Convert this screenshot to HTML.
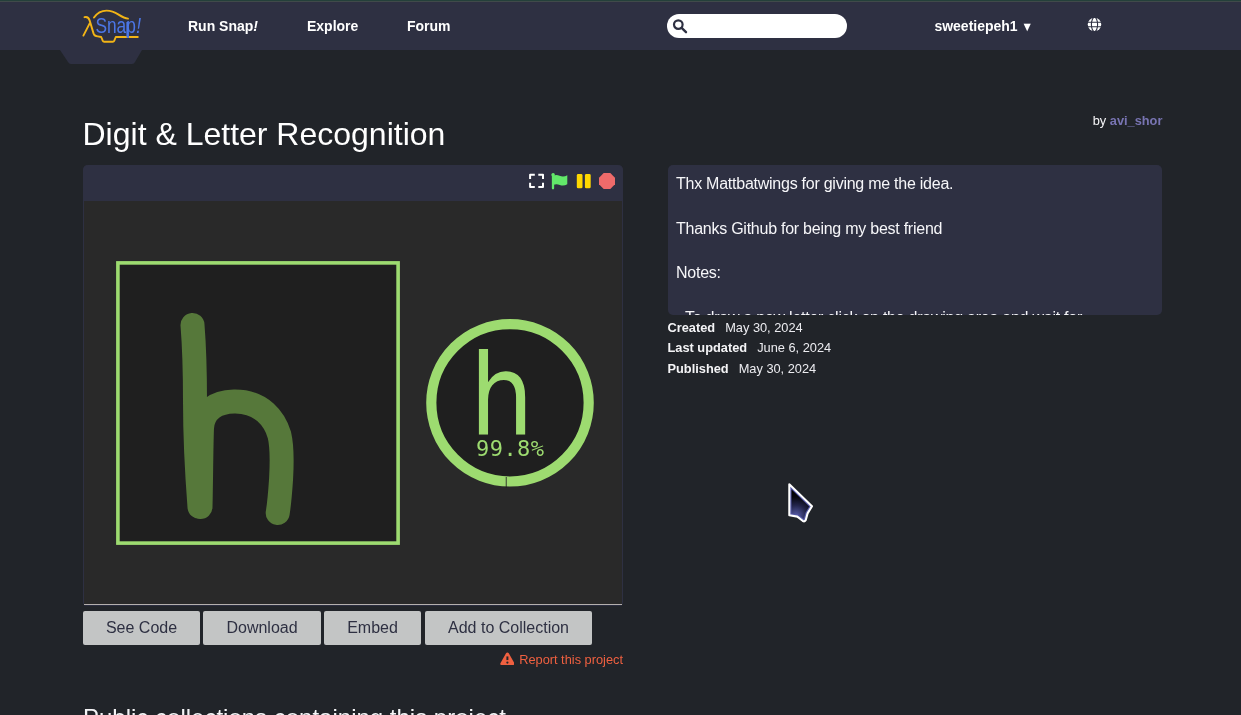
<!DOCTYPE html>
<html lang="en">
<head>
<meta charset="utf-8">
<title>Digit &amp; Letter Recognition</title>
<style>
*{box-sizing:border-box}
html,body{margin:0;padding:0}
body{width:1241px;height:715px;overflow:hidden;background:#212429;color:#f1f1f4;font-family:"Liberation Sans",Arial,sans-serif;position:relative}
#wrap{position:absolute;left:0;top:0;width:1241px;height:715px;overflow:hidden;will-change:transform}
.abs{position:absolute}
#topline{left:0;top:0;width:1241px;height:2px;background:linear-gradient(#24403a 0 1px,#404a4a 1px 2px)}
#nav{left:0;top:2px;width:1241px;height:48px;background:#2e3042}
#tab{left:60px;top:50px;width:82px;height:14px}
.navtxt{font-weight:bold;font-size:14px;line-height:16px;color:#fff;white-space:nowrap;top:18px}
#search{left:667px;top:14px;width:180px;height:24px;border-radius:12px;background:#fff}
h1{margin:0;font-weight:normal;font-size:32px;line-height:38px;left:82.500px;top:115px;white-space:nowrap;color:#fff}
#by{right:78.600px;top:113px;font-size:12.800px;line-height:16px;white-space:nowrap;color:#f6f6f8}
#by b{color:#7874b2}
#stagebox{left:83px;top:165px;width:540px;height:441px;background:#292929;border-radius:5px 5px 4px 4px;overflow:hidden;box-shadow:inset 1px 0 0 #2e3042,inset -1px 0 0 #2e3042}
#stagehead{left:0;top:0;width:540px;height:36px;background:#2e3042}
#stageline{left:1px;top:439px;width:538px;height:1px;background:#b4afad;box-shadow:0 1px 0 #2a2d3f}
#desc{left:668px;top:165px;width:494px;height:150px;background:#2e3042;border-radius:5px;overflow:hidden;font-size:16px;line-height:22.25px;color:#f6f6f9;padding:8px 8px;white-space:nowrap}
#desc div{height:22.25px;letter-spacing:-0.25px}
.meta{left:667.500px;font-size:12.800px;line-height:16px;white-space:nowrap;color:#ececf0}
.meta b{margin-right:10px;color:#f4f4f6}
.btn{top:611px;height:34px;border-radius:2px;background:#c3c5c5;color:#2e3042;font-size:16px;line-height:34px;text-align:center;white-space:nowrap}
#report{top:652px;right:618px;font-size:12.800px;line-height:16px;color:#ef6040;white-space:nowrap}
h2{margin:0;font-weight:normal;font-size:24px;line-height:28px;left:83px;top:704px;white-space:nowrap;color:#f4f4f6}
</style>
</head>
<body>
<div id="wrap">
<div id="topline" class="abs"></div>
<div id="nav" class="abs"></div>
<svg id="tab" class="abs" viewBox="0 0 82 14"><path d="M0 0H82L75 12Q74 14 72 14H11Q9 14 8 12Z" fill="#2e3042"/></svg>

<svg id="logo" class="abs" style="left:80px;top:6px" width="66" height="40" viewBox="0 0 66 40">
 <path d="M4.5 11.2Q8.3 10.2 9.6 14.4L13.6 27.6Q14.6 30.2 17.6 30.4L21.2 31L22.8 34.8Q23.2 35.7 24.2 35.7L32.8 35.7Q33.8 35.7 34.2 34.8L35.8 31L57.8 31M10.2 16.4L3.4 29.6M14 11.6Q18.6 4.6 26.6 4.6Q32.4 4.6 38.6 8.6Q44.4 12.4 48 12.6" fill="none" stroke="#f2b416" stroke-width="1.9" stroke-linecap="round" stroke-linejoin="round"/>
 <text x="15.4" y="27" font-family="'Liberation Sans',sans-serif" font-size="21.5" fill="#4b76e6" textLength="45.800" lengthAdjust="spacingAndGlyphs" font-style="normal">Snap<tspan font-style="italic" dx="0.600">!</tspan></text>
 <path d="M47.2 16V31.6" stroke="#4b76e6" stroke-width="1.6" fill="none"/>
</svg>

<div class="abs navtxt" style="left:188px">Run Snap<i>!</i></div>
<div class="abs navtxt" style="left:307px">Explore</div>
<div class="abs navtxt" style="left:407px">Forum</div>

<div id="search" class="abs">
 <svg class="abs" style="left:5px;top:4px" width="16" height="16" viewBox="0 0 16 16"><circle cx="6.3" cy="6.6" r="4.3" fill="none" stroke="#2e3042" stroke-width="2.2"/><path d="M9.6 9.9L14 14.2" stroke="#2e3042" stroke-width="2.4" stroke-linecap="round"/></svg>
</div>

<div class="abs navtxt" style="left:934.400px">sweetiepeh1</div>
<div class="abs" style="left:1020.800px;top:20px;font-size:12.5px;line-height:14px;color:#fff;width:11px;text-align:center;transform:scale(0.96,1)">▼</div>
<svg class="abs" style="left:1087.300px;top:17px" width="15" height="15" viewBox="0 0 15 15">
 <circle cx="7.5" cy="7.5" r="6.750" fill="#fff"/>
 <g stroke="#2e3042" stroke-width="1.1" fill="none"><path d="M0 5.2H15M0 9.8H15"/><ellipse cx="7.5" cy="7.5" rx="3.1" ry="7.2"/><path d="M7.5 0V15" stroke-width="0"/></g>
</svg>

<h1 class="abs">Digit &amp; Letter Recognition</h1>
<div id="by" class="abs">by <b>avi_shor</b></div>

<div id="stagebox" class="abs">
 <div id="stagehead" class="abs"></div>
 <div id="stageline" class="abs"></div>
 <svg class="abs" style="left:0;top:0" width="540" height="439" viewBox="83 165 540 439">
  <!-- controls -->
  <path d="M530.100 178.900V174.800H534.800M538.300 174.800H543V178.900M543 182.800V187.100H538.300M534.800 187.100H530.100V182.800" fill="none" stroke="#fff" stroke-width="2" stroke-linejoin="round"/>
  <path d="M553 175V188.300" stroke="#62e86a" stroke-width="2.300" stroke-linecap="round"/>
  <circle cx="553.100" cy="174.700" r="1.750" fill="#62e86a"/>
  <path d="M553.500 175.600Q556.500 174.400 559.500 175.700Q563.500 177.300 567.300 175.200V184.300Q563.500 186.600 559.800 184.900Q556.500 183.500 553.500 184.800Z" fill="#62e86a"/>
  <rect x="576.800" y="174" width="5.700" height="14.300" rx="1.400" fill="#ffd800"/><rect x="584.900" y="174" width="5.800" height="14.300" rx="1.400" fill="#ffd800"/>
  <path d="M603.700 173H610.300L615 177.700V184.300L610.300 189H603.700L599 184.300V177.700Z" fill="#ee6a6a"/>
  <!-- drawing area -->
  <rect x="117.900" y="262.900" width="280.200" height="280.200" fill="#1f1f1f" stroke="#9ddb70" stroke-width="3.600"/>
  <path d="M192.500 325C194.500 350 195 380 195 401S196 462 199.500 507M200.500 507C201.200 478 201.200 448 202 428C203 410 216 402 234 401.500C262 401 275 420 279.400 435C283 450 281.500 470 281 480C280 495 279 505 277.700 513" fill="none" stroke="#56783a" stroke-width="24" stroke-linecap="round" stroke-linejoin="round"/>
  <!-- result circle -->
  <circle cx="510" cy="402.800" r="78.700" fill="#1f1f1f" stroke="#9ddb70" stroke-width="10.200"/>
  <path d="M506.300 477V488" stroke="#1f1f1f" stroke-width="1.300" opacity="0.650"/>
  <text transform="translate(501.700 0) scale(0.905 1) translate(-501.700 0)" x="501.700" y="433.800" text-anchor="middle" font-family="'DejaVu Sans',sans-serif" font-size="111.500" fill="#9ddb70">h</text>
  <text x="476" y="456.100" letter-spacing="0.450" font-family="'DejaVu Sans Mono',monospace" font-size="22" fill="#9ddb70">99.8%</text>
 </svg>
</div>

<div id="desc" class="abs">
 <div>Thx Mattbatwings for giving me the idea.</div>
 <div></div>
 <div>Thanks Github for being my best friend</div>
 <div></div>
 <div>Notes:</div>
 <div></div>
 <div>- To draw a new letter click on the drawing area and wait for</div>
</div>

<div class="abs meta" style="top:320px"><b>Created</b>May 30, 2024</div>
<div class="abs meta" style="top:340px"><b>Last updated</b>June 6, 2024</div>
<div class="abs meta" style="top:361px"><b>Published</b>May 30, 2024</div>

<svg class="abs" style="left:786px;top:481px;filter:drop-shadow(0.600px 0.600px 0.700px rgba(0,0,0,.7))" width="30" height="44" viewBox="786 481 30 44">
 <defs><radialGradient id="cg" gradientUnits="userSpaceOnUse" cx="796" cy="516" r="24"><stop offset="0" stop-color="#5a5eac"/><stop offset="0.450" stop-color="#22244a"/><stop offset="0.800" stop-color="#05050c"/><stop offset="1" stop-color="#000"/></radialGradient><clipPath id="cc"><path d="M789.300 484.200L812 506.200L807.600 513.400L805.700 520.200Q804.500 522 802.600 520.800L797.300 516.600L789.300 515.300Z"/></clipPath></defs>
 <path d="M789.300 484.200L812 506.200L807.600 513.400L805.700 520.200Q804.500 522 802.600 520.800L797.300 516.600L789.300 515.300Z" fill="url(#cg)" stroke="#5558a6" stroke-width="4.400" stroke-linejoin="round" clip-path="url(#cc)"/>
 <path d="M789.300 484.200L812 506.200L807.600 513.400L805.700 520.200Q804.500 522 802.600 520.800L797.300 516.600L789.300 515.300Z" fill="none" stroke="#fff" stroke-width="2.100" stroke-linejoin="round"/>
</svg>

<div class="abs btn" style="left:83px;width:117px">See Code</div>
<div class="abs btn" style="left:203px;width:118px">Download</div>
<div class="abs btn" style="left:324px;width:97px">Embed</div>
<div class="abs btn" style="left:425px;width:167px">Add to Collection</div>

<div id="report" class="abs"><svg style="vertical-align:-1.600px;margin-right:4.800px" width="14.800" height="13.400" viewBox="0 0 15 13.400"><path d="M7.500 0.300Q8.400 0.300 8.900 1.200L14.600 11.200Q15.200 12.900 13.600 13.100H1.400Q-0.200 12.900 0.400 11.200L6.100 1.200Q6.600 0.300 7.500 0.300Z" fill="#ef6040"/><path d="M7.500 4.400V8.100" stroke="#212429" stroke-width="2" stroke-linecap="butt"/><circle cx="7.500" cy="10.600" r="1.150" fill="#212429"/></svg>Report this project</div>

<h2 class="abs">Public collections containing this project</h2>
</div>
</body>
</html>
